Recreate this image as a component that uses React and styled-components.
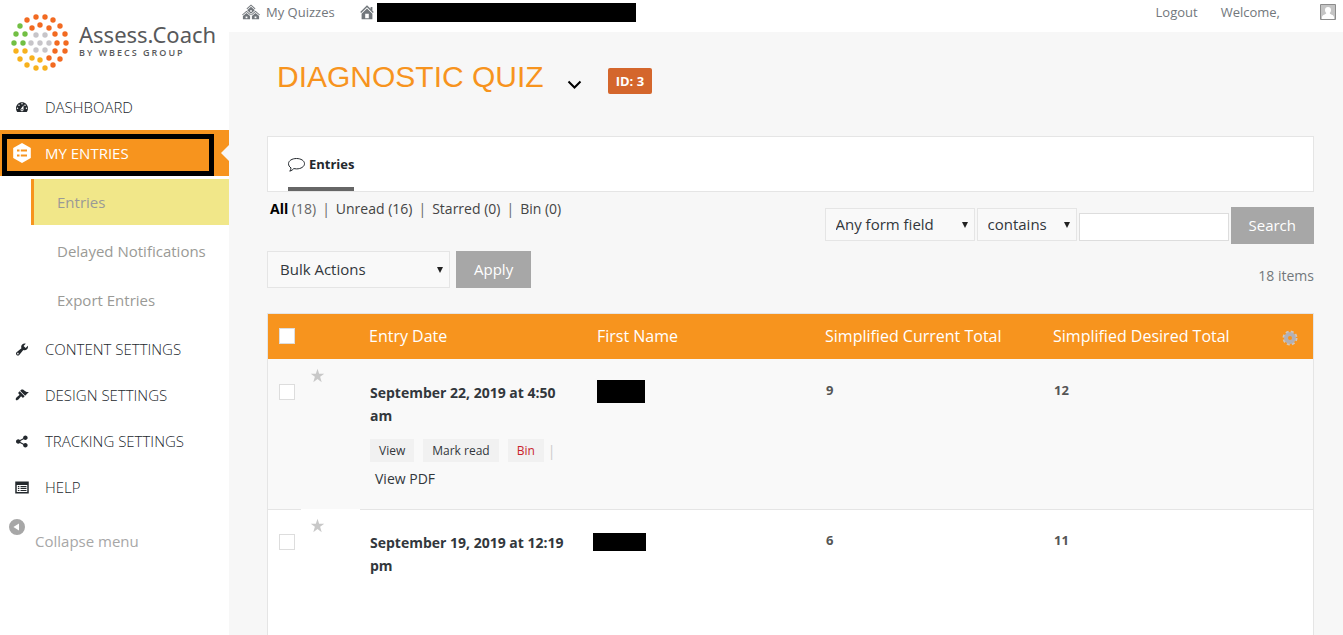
import React, { useState } from 'react';
import styled, { createGlobalStyle, css } from 'styled-components';

const GlobalStyle = createGlobalStyle`
    * {
        box-sizing: border-box;
    }
    body {
        margin: 0;
        background: #f7f7f7;
        color: #32373c;
        font-family: "Open Sans", sans-serif;
        font-size: 14px;
    }
    button, input, select {
        font-family: inherit;
    }
    a {
        color: inherit;
        text-decoration: none;
    }
`;

const Shell = styled.div`
    display: grid;
    grid-template-columns: 229px 1fr;
    min-height: 100vh;
`;

/* sidebar */
const Sidebar = styled.aside`
    background: #fff;
`;
const Logo = styled.a`
    display: flex;
    gap: 9px;
    height: 84px;
    padding: 12px 0 0 10px;
    color: #58595b;
`;
const LogoText = styled.span`
    display: flex;
    flex-direction: column;
    padding-top: 8px;
`;
const LogoName = styled.span`
    font-size: 22px;
    line-height: 28px;
    font-family: "Noto Sans", sans-serif;
`;
const LogoSub = styled.span`
    font-size: 9px;
    line-height: 10px;
    letter-spacing: 2px;
    font-weight: 600;
`;
const MenuLink = styled.a`
    position: relative;
    display: flex;
    align-items: center;
    gap: 13px;
    height: 46px;
    padding-left: 12px;
    font-size: 15px;
    font-weight: 300;
    color: #23282d;
    svg {
        width: 20px;
        flex: none;
    }
    ${({ $active }) => $active && css`
        background: #f7941e;
        color: #fff;
        font-weight: 400;
        &::after {
            content: '';
            position: absolute;
            right: 0;
            top: 15px;
            border: 8px solid transparent;
            border-left-width: 0;
            border-right-color: #f7f7f7;
        }
    `}
`;
const Marker = styled.span`
    position: absolute;
    inset: 4px 15px 0 2px;
    border: 5px solid #000;
`;
const SubMenu = styled.div`
    display: grid;
    gap: 3px;
    padding: 3px 0 3px 31px;
`;
const SubLink = styled.a`
    display: flex;
    align-items: center;
    height: 46px;
    padding-left: 23px;
    border-left: 3px solid ${({ $active }) => ($active ? '#f7941e' : 'transparent')};
    background: ${({ $active }) => ($active ? '#f1e789' : 'transparent')};
    color: #9a9a96;
    font-size: 15px;
`;
const CollapseButton = styled.button`
    display: flex;
    gap: 10px;
    padding: 9px 0 0 9px;
    border: 0;
    background: none;
    color: #a7a7a7;
    font-size: 15px;
    line-height: 20px;
    span {
        padding-top: 12px;
    }
`;

/* top bar */
const Content = styled.div`
    display: flex;
    flex-direction: column;
`;
const TopBar = styled.header`
    display: flex;
    align-items: center;
    height: 32px;
    padding: 0 7px 8px 13px;
    background: #fff;
    color: #72777c;
    font-size: 13px;
`;
const TopLink = styled.a`
    display: flex;
    align-items: center;
    gap: ${({ $gap }) => $gap || 6}px;
    margin-right: 23px;
`;
const Spacer = styled.span`
    flex: 1;
`;
const Avatar = styled.svg`
    margin-left: 17px;
`;
const Redacted = styled.span`
    display: block;
    width: ${({ $w }) => $w}px;
    height: ${({ $h }) => $h}px;
    background: #000;
`;

/* page */
const Main = styled.main`
    flex: 1;
    display: flex;
    flex-direction: column;
    padding: 0 29px 0 38px;
`;
const TitleRow = styled.div`
    display: flex;
    align-items: center;
    height: 104px;
    padding: 0 10px 14px;
`;
const Title = styled.h1`
    margin: 0;
    color: #f7941e;
    font: 400 30px/36px "Liberation Sans", sans-serif;
`;
const SwitchButton = styled.button`
    display: flex;
    padding: 16px 0 0;
    margin: 0 26px 0 23px;
    border: 0;
    background: none;
`;
const IdBadge = styled.span`
    margin-top: 8px;
    padding: 0 8px;
    border-radius: 2px;
    background: #d4662c;
    color: #fff;
    font-size: 13px;
    font-weight: 700;
    line-height: 26px;
`;
const TabBar = styled.nav`
    display: flex;
    height: 56px;
    padding: 0 20px;
    border: 1px solid #e5e5e5;
    background: #fff;
`;
const Tab = styled.a`
    display: flex;
    align-items: center;
    gap: 4px;
    border-bottom: 4px solid #666;
    padding-top: 4px;
    font-size: 13px;
    font-weight: 700;
    color: #23282d;
`;
const ToolRow = styled.div`
    display: flex;
    justify-content: space-between;
    align-items: flex-start;
    padding-top: 7px;
`;
const StatusList = styled.ul`
    display: flex;
    margin: 0;
    padding: 0 0 0 3px;
    list-style: none;
    line-height: 20px;
    color: #666;
    li + li::before {
        content: '|';
        margin: 0 6px;
    }
    a {
        color: #444;
    }
    strong {
        color: #000;
    }
`;
const SearchForm = styled.form`
    display: flex;
    align-items: center;
    gap: 2px;
    padding-top: 8px;
`;
const Fields = styled.div`
    display: flex;
    align-items: flex-end;
    gap: 2px;
    padding-bottom: 2px;
`;
const SelectBox = styled.label`
    position: relative;
    display: block;
    width: ${({ $w }) => $w}px;
    &::after {
        content: '';
        position: absolute;
        right: 7px;
        top: 50%;
        margin-top: -3px;
        border: 3px solid transparent;
        border-top: 6px solid #222;
        border-bottom: 0;
        pointer-events: none;
    }
    select {
        appearance: none;
        width: 100%;
        height: ${({ $h }) => $h}px;
        padding: 0 ${({ $pad }) => $pad}px 1px;
        border: 1px solid #e5e5e5;
        border-radius: 0;
        background: #f9f9f9;
        color: #32373c;
        font-size: 15px;
    }
`;
const SearchInput = styled.input`
    width: 150px;
    height: 28px;
    border: 1px solid #ddd;
    background: #fff;
`;
const GreyButton = styled.button`
    height: 37px;
    padding: 0 18px 2px;
    border: 0;
    background: #a7a7a7;
    color: #fff;
    font-size: 15px;
`;
const BulkActions = styled.div`
    display: flex;
    align-items: flex-end;
    gap: 6px;
`;
const ItemCount = styled.span`
    padding-top: 15px;
    line-height: 20px;
    color: #72777c;
`;

/* entries table */
const TableWrap = styled.div`
    flex: 1;
    margin-top: 25px;
    border: 1px solid #e5e5e5;
    border-bottom: 0;
    background: #fff;
`;
const Table = styled.table`
    width: 100%;
    table-layout: fixed;
    border-collapse: separate;
    border-spacing: 0;
`;
const HeadCell = styled.th`
    width: ${({ $w }) => ($w ? `${$w}px` : 'auto')};
    height: 45px;
    padding: 0 0 1px ${({ $pad = 9 }) => $pad}px;
    background: #f7941e;
    color: #fff;
    font-size: 16px;
    font-weight: 400;
    text-align: left;
    svg {
        display: block;
        margin-top: 4px;
    }
`;
const EntryRow = styled.tr`
    background: ${({ $alt }) => ($alt ? '#f9f9f9' : '#fff')};
`;
const Cell = styled.td`
    padding: ${({ $top = 21 }) => $top}px 16px 19px ${({ $pad = 10 }) => $pad}px;
    border-top: 1px solid ${({ $line }) => ($line ? '#e5e5e5' : 'transparent')};
    vertical-align: top;
    line-height: 23px;
`;
const CheckBox = styled.input`
    appearance: none;
    display: block;
    width: 16px;
    height: 16px;
    margin: 0;
    border: 1px solid #ddd;
    background: #fff;
    &:checked {
        background: #f7941e;
    }
`;
const StarButton = styled.button`
    display: block;
    padding: 0;
    border: 0;
    background: none;
    color: #c8c8c8;
`;
const EntryDate = styled.a`
    display: block;
    font-weight: 700;
`;
const RowActions = styled.div`
    display: flex;
    gap: 9px;
    margin: 12px -16px 5px 0;
    color: #ccc;
    a {
        padding: 0 9px;
        background: #f1f1f1;
        color: #32373c;
        font-size: 12px;
    }
    a:last-of-type {
        color: #c9232d;
        margin-right: -5px;
    }
`;
const PdfLink = styled.a`
    display: block;
    padding-left: 5px;
`;
const Score = styled.span`
    display: block;
    line-height: 18px;
    font-size: 13px;
    font-weight: 700;
    color: #555;
`;

const paths = {
    dashboard: 'M3.76 16h12.48c1.1-1.37 1.76-3.11 1.76-5 0-4.42-3.58-8-8-8s-8 3.58-8 8c0 1.89.66 3.63 1.76 5zM10 4c.55 0 1 .45 1 1s-.45 1-1 1-1-.45-1-1 .45-1 1-1zM6 6c.55 0 1 .45 1 1s-.45 1-1 1-1-.45-1-1 .45-1 1-1zm8 0c.55 0 1 .45 1 1s-.45 1-1 1-1-.45-1-1 .45-1 1-1zm-5.37 5.55L12 7v6c0 1.1-.9 2-2 2s-2-.9-2-2c0-.57.24-1.08.63-1.45zM4 10c.55 0 1 .45 1 1s-.45 1-1 1-1-.45-1-1 .45-1 1-1zm12 0c.55 0 1 .45 1 1s-.45 1-1 1-1-.45-1-1 .45-1 1-1zm-5 3c0-.55-.45-1-1-1s-1 .45-1 1 .45 1 1 1 1-.45 1-1z',
    entries: 'M10 0L18.8 5v10L10 20 1.2 15V5zM5 6.500v2h2.500v-2zM8.800 6.500v2H15v-2zM5 11.500v2h2.500v-2zM8.800 11.500v2H15v-2z',
    tools: 'M16.68 9.77c-1.34 1.34-3.3 1.67-4.95.99l-5.41 6.52c-.99.99-2.59.99-3.58 0s-.99-2.59 0-3.57l6.52-5.42c-.68-1.65-.35-3.61.99-4.95 1.28-1.28 3.12-1.62 4.72-1.06l-2.89 2.89 2.82 2.82 2.86-2.87c.53 1.58.18 3.39-1.08 4.65zM3.81 16.21c.4.39 1.04.39 1.43 0 .4-.4.4-1.04 0-1.43-.39-.4-1.03-.4-1.43 0-.39.39-.39 1.03 0 1.43z',
    brush: 'M14.48 11.06L7.41 3.99l1.5-1.5c.5-.56 2.3-.47 3.51.32 1.21.8 1.43 1.28 2.91 2.1 1.18.64 2.45 1.26 4.45.85zm-.71.71L6.7 4.7 4.93 6.47c-.39.39-.39 1.02 0 1.41l1.06 1.06c.39.39.39 1.03 0 1.42-.6.6-1.43 1.11-2.21 1.69-.35.26-.7.53-1.01.84C1.43 14.23.4 16.08 1.4 17.07c.99 1 2.84-.03 4.18-1.36.31-.31.58-.66.85-1.02.57-.78 1.08-1.61 1.69-2.21.39-.39 1.02-.39 1.41 0l1.06 1.06c.39.39 1.02.39 1.41 0z',
    share: 'M14.5 12c1.66 0 3 1.34 3 3s-1.34 3-3 3-3-1.34-3-3c0-.24.03-.46.09-.69l-4.38-2.3c-.55.61-1.33.99-2.21.99-1.66 0-3-1.34-3-3s1.34-3 3-3c.88 0 1.66.39 2.21.99l4.38-2.3c-.06-.23-.09-.45-.09-.69 0-1.66 1.34-3 3-3s3 1.34 3 3-1.34 3-3 3c-.88 0-1.66-.39-2.21-.99l-4.38 2.3c.06.23.09.45.09.69s-.03.46-.09.69l4.38 2.3c.55-.61 1.33-.99 2.21-.99z',
    help: 'M1 2h18v16H1zM3 6.500v9.500h14V6.500zM4.500 8h2v1.500h-2zM8 8h8v1.500H8zM4.500 10.600h2v1.500h-2zM8 10.600h8v1.500H8zM4.500 13.200h2v1.500h-2zM8 13.200h8v1.500H8z',
    sites: 'M14.27 6.87L10 3.14 5.73 6.87 5 6.14l5-4.38 5 4.38zM14 8.42l-4.05 3.43L6 8.38v-.74l4-3.5 4 3.5v.78zM11 9.7V8H9v1.7h2zm-1.73 4.03L5 10 .73 13.73 0 13l5-4.38L10 13zm10 0L15 10l-4.27 3.73L10 13l5-4.38L20 13zM5 11l4 3.5V18H1v-3.5zm10 0l4 3.5V18h-8v-3.5zm-9 6v-2H4v2h2zm10 0v-2h-2v2h2z',
    home: 'M16 8.5l1.53 1.53-1.06 1.06L10 4.6l-6.47 6.49-1.06-1.06L10 2.5l4 4v-2h2v4zm-6-2.46l6 5.99V18H4v-5.97zM12 17v-5H8v5h4z',
    star: 'M10 1l2.200 6.600H19l-5.500 4.100L15.600 19 10 14.500 4.400 19l2.100-7.300L1 7.600h6.800z',
    collapse: 'M10 0a10 10 0 1 0 0 20 10 10 0 1 0 0-20zM5.500 10L12.500 5.500v9z',
};

const Icon = ({ name, size = 20 }) => (
    <svg width={size} height={size} viewBox="0 0 20 20" fill="currentColor" fillRule="evenodd" aria-hidden="true">
        <path d={paths[name]} />
    </svg>
);

// dashed outer ring makes the teeth
const GearIcon = () => (
    <svg width="16" height="16" viewBox="0 0 16 16" fill="none" stroke="#b3b0b4" aria-hidden="true">
        <circle cx="8" cy="8" r="6" strokeWidth="3" strokeDasharray="2.700 2.012" stroke="#d0c6bc" />
        <circle cx="8" cy="8" r="4" strokeWidth="4" />
    </svg>
);

const O = '#f26a21';
const G = '#72bf44';
const Y = '#f7b11d';
const S = '#c7c5c9';
const dots = [
    [26, 5, O], [35, 5, O], [17, 8, O], [43, 8, O], [10, 14, G], [50, 14, O],
    [6, 22, G], [55, 22, O], [4, 31, G], [56, 31, O], [6, 39, Y], [55, 39, O],
    [10, 47, Y], [50, 47, O], [17, 53, Y], [43, 53, O], [26, 56, Y], [35, 56, Y],
    [30, 13, O], [22, 16, O], [39, 16, O], [15, 22, G], [45, 22, O], [13, 31, G],
    [47, 31, O], [15, 39, Y], [45, 39, O], [22, 46, Y], [39, 46, O], [30, 48, Y],
    [26, 23, S], [35, 23, S], [21, 31, S], [30, 31, S], [39, 31, S], [26, 38, S], [35, 38, S],
];

const LogoMark = () => (
    <svg width="60" height="60" viewBox="0 0 60 60" aria-hidden="true">
        {dots.map(([x, y, fill]) => (
            <circle key={`${x}-${y}`} cx={x} cy={y} r="2.700" fill={fill} />
        ))}
    </svg>
);

const settingsMenu = [
    { label: 'CONTENT SETTINGS', icon: 'tools', size: 15 },
    { label: 'DESIGN SETTINGS', icon: 'brush', size: 14 },
    { label: 'TRACKING SETTINGS', icon: 'share', size: 15 },
    { label: 'HELP', icon: 'help', size: 15 },
];

const statuses = [
    { label: 'Unread', count: 16 },
    { label: 'Starred', count: 0 },
    { label: 'Bin', count: 0 },
];

const entries = [
    { id: 1, date: 'September 22, 2019 at 4:50 am', name: [48, 23], current: 9, desired: 12, actions: true },
    { id: 2, date: 'September 19, 2019 at 12:19 pm', name: [53, 18], current: 6, desired: 11 },
];

const Entry = ({ entry, index }) => {
    const [starred, setStarred] = useState(false);
    const line = index > 0;
    return (
        <EntryRow $alt={index % 2 === 0}>
            <Cell $pad={11} $top={24} $line={line}>
                <CheckBox type="checkbox" aria-label={`Select entry ${entry.id}`} />
            </Cell>
            <Cell $top={8} $pad={9}>
                <StarButton type="button" aria-label="Star" aria-pressed={starred} onClick={() => setStarred(!starred)}>
                    <Icon name="star" size={15} />
                </StarButton>
            </Cell>
            <Cell $line={line}>
                <EntryDate href="#entry">{entry.date}</EntryDate>
                {entry.actions && (
                    <>
                        <RowActions>
                            <a href="#view">View</a>
                            <a href="#read">Mark read</a>
                            <a href="#bin">Bin</a>
                            <span>|</span>
                        </RowActions>
                        <PdfLink href="#pdf">View PDF</PdfLink>
                    </>
                )}
            </Cell>
            <Cell $line={line} $top={line ? 23 : 20} $pad={line ? 5 : 9}>
                <Redacted $w={entry.name[0]} $h={entry.name[1]} />
            </Cell>
            <Cell $line={line}><Score>{entry.current}</Score></Cell>
            <Cell $line={line}><Score>{entry.desired}</Score></Cell>
            <Cell $line={line} />
        </EntryRow>
    );
};

const App = () => (
    <>
        <GlobalStyle />
        <Shell>
            <Sidebar>
                <Logo href="#home">
                    <LogoMark />
                    <LogoText>
                        <LogoName>Assess.Coach</LogoName>
                        <LogoSub>BY WBECS GROUP</LogoSub>
                    </LogoText>
                </Logo>
                <nav>
                    <MenuLink href="#dashboard"><Icon name="dashboard" size={15} />DASHBOARD</MenuLink>
                    <MenuLink href="#entries" $active>
                        <Icon name="entries" />
                        MY ENTRIES
                        <Marker />
                    </MenuLink>
                    <SubMenu>
                        <SubLink href="#entries" $active>Entries</SubLink>
                        <SubLink href="#delayed">Delayed Notifications</SubLink>
                        <SubLink href="#export">Export Entries</SubLink>
                    </SubMenu>
                    {settingsMenu.map(({ label, icon, size }) => (
                        <MenuLink href="#settings" key={label}>
                            <Icon name={icon} size={size} />
                            {label}
                        </MenuLink>
                    ))}
                </nav>
                <CollapseButton type="button">
                    <Icon name="collapse" size={16} />
                    <span>Collapse menu</span>
                </CollapseButton>
            </Sidebar>
            <Content>
                <TopBar>
                    <TopLink href="#quizzes"><Icon name="sites" size={18} />My Quizzes</TopLink>
                    <TopLink href="#site" $gap={1}>
                        <Icon name="home" size={18} />
                        <Redacted $w={259} $h={19} />
                    </TopLink>
                    <Spacer />
                    <TopLink href="#logout">Logout</TopLink>
                    <TopLink href="#profile">Welcome,</TopLink>
                    <Avatar width="16" height="16" viewBox="0 0 16 16" aria-hidden="true">
                        <path fill="#c4c4c4" stroke="#8c8c8c" d="M.5.500h15v15H.5z" />
                        <path fill="#fff" d="M8 3a3 3 0 0 1 3 3c0 1.500-.7 2.500-1.300 3 .2 1.500 3.800 1.500 4.300 4v2H2v-2c.5-2.500 4.100-2.500 4.300-4C5.700 8.500 5 7.500 5 6a3 3 0 0 1 3-3z" />
                    </Avatar>
                </TopBar>
                <Main>
                    <TitleRow>
                        <Title>DIAGNOSTIC QUIZ</Title>
                        <SwitchButton type="button" aria-label="Switch form">
                            <svg width="15" height="10" viewBox="0 0 15 10" fill="none" stroke="#000" strokeWidth="2">
                                <path d="M1.500 1.500l6 6 6-6" />
                            </svg>
                        </SwitchButton>
                        <IdBadge>ID: 3</IdBadge>
                    </TitleRow>
                    <TabBar>
                        <Tab href="#entries">
                            <svg width="17" height="16" viewBox="0 0 17 16" fill="none" stroke="#23282d" aria-hidden="true">
                                <path d="M8.500 2.500c4.500 0 8 2.300 8 5.200s-3.500 5.200-8 5.200c-1 0-1.900-.1-2.700-.3-.9 1.100-2.200 2-4 2.600.7-.9 1.100-2 1.200-3.300C1.400 10.900.5 9.400.5 7.700c0-2.900 3.500-5.200 8-5.200z" />
                            </svg>
                            Entries
                        </Tab>
                    </TabBar>
                    <ToolRow>
                        <StatusList>
                            <li><a href="#all"><strong>All</strong></a> (18)</li>
                            {statuses.map(({ label, count }) => (
                                <li key={label}><a href="#status">{label} ({count})</a></li>
                            ))}
                        </StatusList>
                        <SearchForm onSubmit={(e) => e.preventDefault()}>
                            <Fields>
                                <SelectBox $w={150} $h={33} $pad={10}>
                                    <select aria-label="Field"><option>Any form field</option></select>
                                </SelectBox>
                                <SelectBox $w={100} $h={33} $pad={10}>
                                    <select aria-label="Operator"><option>contains</option></select>
                                </SelectBox>
                                <SearchInput type="text" aria-label="Search value" />
                            </Fields>
                            <GreyButton type="submit">Search</GreyButton>
                        </SearchForm>
                    </ToolRow>
                    <ToolRow>
                        <BulkActions>
                            <SelectBox $w={183} $h={37} $pad={12}>
                                <select aria-label="Bulk action"><option>Bulk Actions</option></select>
                            </SelectBox>
                            <GreyButton type="button">Apply</GreyButton>
                        </BulkActions>
                        <ItemCount>18 items</ItemCount>
                    </ToolRow>
                    <TableWrap>
                        <Table>
                            <thead>
                                <tr>
                                    <HeadCell $w={33} $pad={11}><CheckBox type="checkbox" aria-label="Select all" /></HeadCell>
                                    <HeadCell $w={59} aria-label="Starred" />
                                    <HeadCell>Entry Date</HeadCell>
                                    <HeadCell>First Name</HeadCell>
                                    <HeadCell>Simplified Current Total</HeadCell>
                                    <HeadCell>Simplified Desired Total</HeadCell>
                                    <HeadCell $w={41} $pad={10}><GearIcon /></HeadCell>
                                </tr>
                            </thead>
                            <tbody>
                                {entries.map((entry, i) => (
                                    <Entry key={entry.id} entry={entry} index={i} />
                                ))}
                            </tbody>
                        </Table>
                    </TableWrap>
                </Main>
            </Content>
        </Shell>
    </>
);

export default App;
